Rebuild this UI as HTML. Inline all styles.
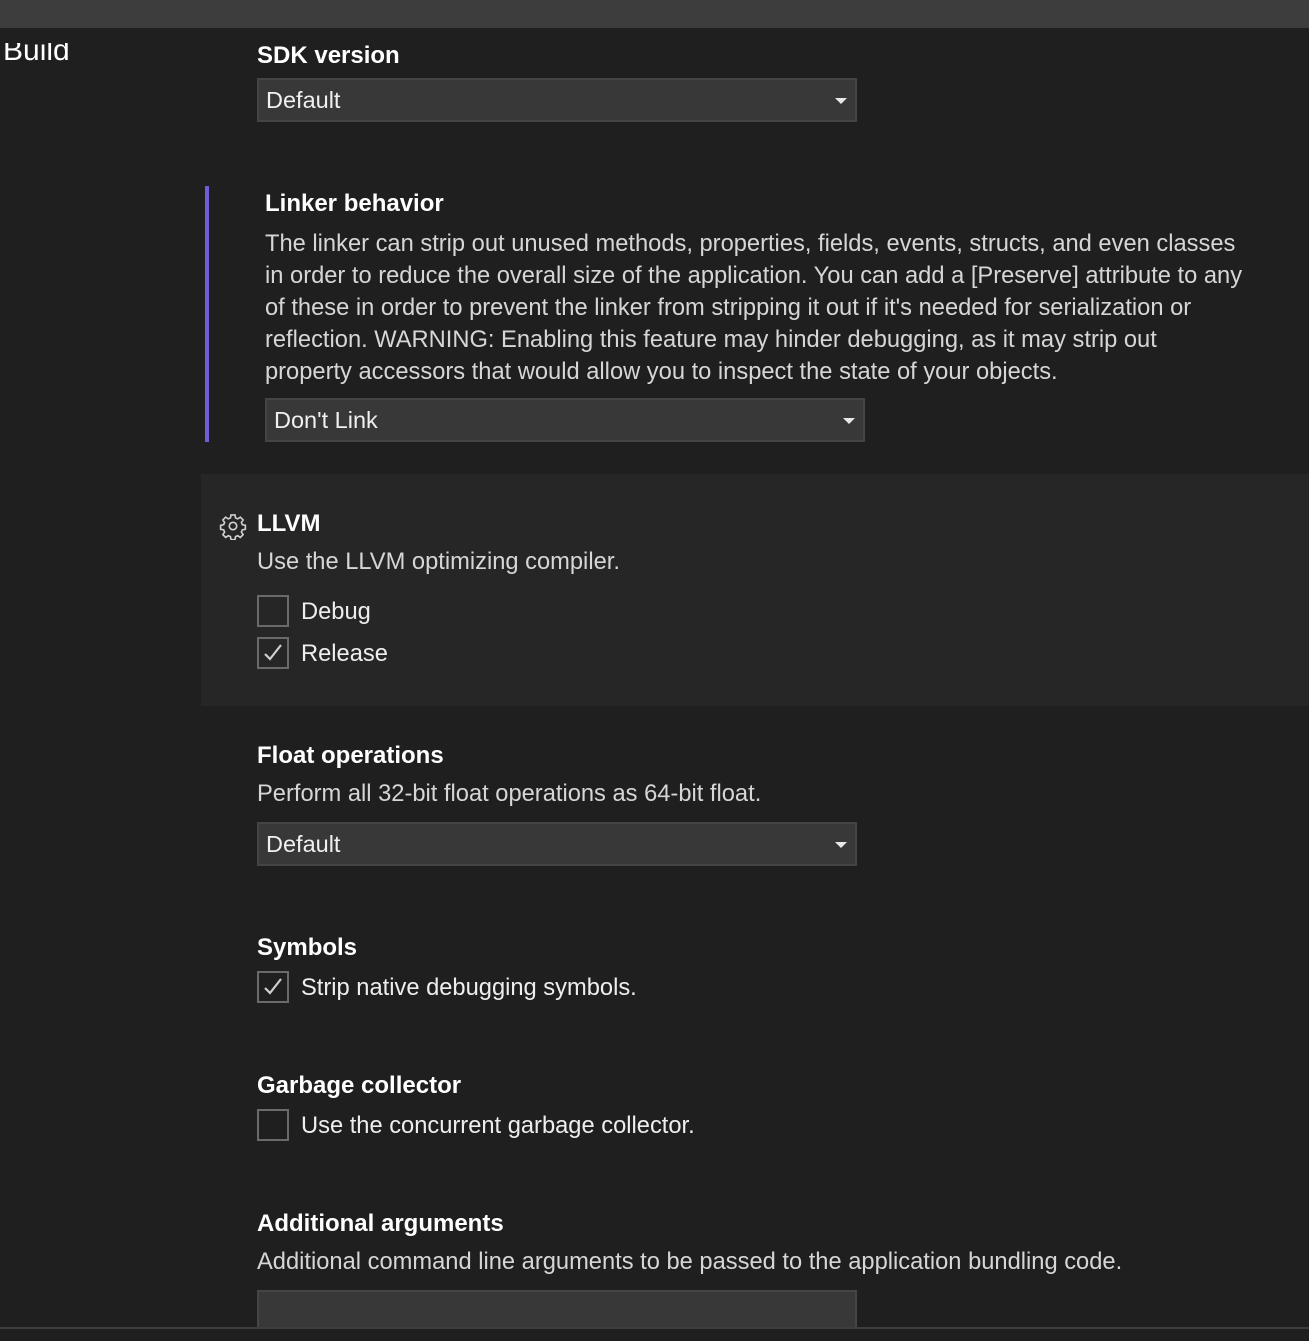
<!DOCTYPE html>
<html><head><meta charset="utf-8"><style>
*{margin:0;padding:0;box-sizing:border-box}
body{width:1309px;height:1341px;background:#1f1f1f;font-family:"Liberation Sans","DejaVu Sans",sans-serif;color:#d6d6d6;position:relative;overflow:hidden}
.a{position:absolute;white-space:nowrap}
.h{font-weight:bold;color:#fff;font-size:24px}
.t{font-size:23.7px;color:#d6d6d6}
.dd{position:absolute;width:600px;height:44px;background:#383838;border:2px solid #454545;color:#f0f0f0;font-size:23.5px;padding:7px 0 0 7px}
.dd:after{content:"";position:absolute;right:8px;top:18px;border-left:6px solid transparent;border-right:6px solid transparent;border-top:6px solid #e8e8e8}
.cb{position:absolute;width:32px;height:32px;border:2px solid #6a6a6a}
</style></head><body>
<div class="a" style="left:0;top:0;width:1309px;height:28px;background:#3d3d3d"></div>
<div class="a" style="left:0;top:43px;width:120px;height:22px;overflow:hidden"><div class="a" style="left:3px;font-size:30px;line-height:36px;color:#fff;top:-10px">Build</div></div>
<div class="a h" style="left:257px;top:42px">SDK version</div>
<div class="dd" style="left:257px;top:78px">Default</div>

<div class="a" style="left:205px;top:186px;width:4px;height:256px;background:#6e5fd8"></div>
<div class="a h" style="left:265px;top:190px">Linker behavior</div>
<div class="a t" style="left:265px;top:228px;line-height:32px">The linker can strip out unused methods, properties, fields, events, structs, and even classes<br>in order to reduce the overall size of the application. You can add a [Preserve] attribute to any<br>of these in order to prevent the linker from stripping it out if it's needed for serialization or<br>reflection. WARNING: Enabling this feature may hinder debugging, as it may strip out<br>property accessors that would allow you to inspect the state of your objects.</div>
<div class="dd" style="left:265px;top:398px">Don't Link</div>

<div class="a" style="left:201px;top:474px;width:1108px;height:232px;background:#262626"></div>
<svg class="a" style="left:219px;top:512px" width="28" height="28" viewBox="0 0 24 24" fill="none" stroke="#d0d0d0" stroke-width="1.4"><circle cx="12" cy="12" r="3.2"/><path d="M10.3 2.5h3.4l.5 2.6 1.9.8 2.2-1.5 2.4 2.4-1.5 2.2.8 1.9 2.6.5v3.4l-2.6.5-.8 1.9 1.5 2.2-2.4 2.4-2.2-1.5-1.900.8-.5 2.6h-3.4l-.5-2.6-1.9-.8-2.2 1.5-2.4-2.4 1.5-2.2-.8-1.9-2.6-.5v-3.4l2.6-.5.8-1.9-1.5-2.2 2.4-2.4 2.2 1.5 1.9-.8z"/></svg>
<div class="a h" style="left:257px;top:510px">LLVM</div>
<div class="a t" style="left:257px;top:549px">Use the LLVM optimizing compiler.</div>
<div class="cb" style="left:257px;top:595px"></div>
<div class="a t" style="left:301px;top:599px;color:#eee">Debug</div>
<div class="cb" style="left:257px;top:637px"></div>
<svg class="a" style="left:262px;top:642px" width="22" height="22" viewBox="0 0 22 22"><path d="M3 12l5 5 11-14" fill="none" stroke="#d0d0d0" stroke-width="2.2"/></svg>
<div class="a t" style="left:301px;top:641px;color:#eee">Release</div>

<div class="a h" style="left:257px;top:742px">Float operations</div>
<div class="a t" style="left:257px;top:781px">Perform all 32-bit float operations as 64-bit float.</div>
<div class="dd" style="left:257px;top:822px">Default</div>

<div class="a h" style="left:257px;top:934px">Symbols</div>
<div class="cb" style="left:257px;top:971px"></div>
<svg class="a" style="left:262px;top:976px" width="22" height="22" viewBox="0 0 22 22"><path d="M3 12l5 5 11-14" fill="none" stroke="#d0d0d0" stroke-width="2.2"/></svg>
<div class="a t" style="left:301px;top:975px;color:#eee">Strip native debugging symbols.</div>

<div class="a h" style="left:257px;top:1072px">Garbage collector</div>
<div class="cb" style="left:257px;top:1109px"></div>
<div class="a t" style="left:301px;top:1113px;color:#eee">Use the concurrent garbage collector.</div>

<div class="a h" style="left:257px;top:1210px">Additional arguments</div>
<div class="a t" style="left:257px;top:1249px">Additional command line arguments to be passed to the application bundling code.</div>
<div class="a" style="left:257px;top:1290px;width:600px;height:40px;background:#383838;border:2px solid #454545"></div>
<div class="a" style="left:0;top:1327px;width:1309px;height:14px;background:#1f1f1f;border-top:2px solid #3d3d3d"></div>
</body></html>
